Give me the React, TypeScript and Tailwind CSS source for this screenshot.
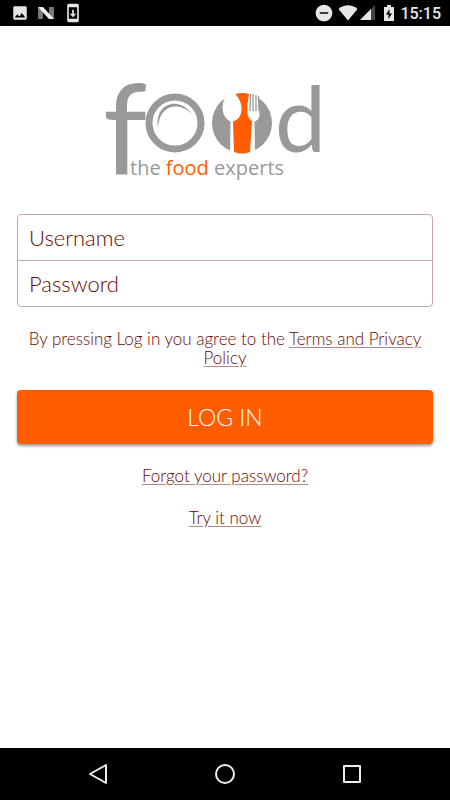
import { useState } from "react";
import { MdImage, MdSystemUpdate, MdDoNotDisturbOn } from "react-icons/md";

function StatusBar() {
  return (
    <header className="flex h-[26px] items-center justify-between bg-black pl-[11px] pr-[9px] text-[#e6e6e6]">
      <div className="flex items-center gap-2">
        <MdImage className="size-[18px]" />
        <svg viewBox="0 0 18 16" className="h-4 w-[18px]">
          <path d="M1 2h5v12H1zM12 2h5v12h-5z" fill="#777" />
          <path d="M1 2h5l11 12h-5z" fill="#f0f0f0" />
        </svg>
        <MdSystemUpdate className="size-5" />
      </div>
      <div className="flex items-center">
        <MdDoNotDisturbOn className="size-5" />
        <svg viewBox="0 0 20 16" className="ml-1 h-4 w-5" fill="currentColor">
          <path d="M0.5 4C6-1 14-1 19.5 4L10 15.500z" />
        </svg>
        <svg viewBox="0 0 16 16" className="ml-0.5 h-4 w-4">
          <path d="M15 0v15H0z" fill="#444" />
          <path d="M11 4v11H0z" fill="currentColor" />
        </svg>
        <svg viewBox="0 0 10 16" className="ml-2 h-4 w-2.5">
          <path d="M3 0h4v2h3v14H0V2h3z" fill="currentColor" />
          <path d="M5.500 4L2 9.500h2.500V14L8 8.500H5.500z" fill="#000" />
        </svg>
        <span className="ml-1.5 pt-0.5 font-['Roboto',sans-serif] text-base font-medium">
          15:15
        </span>
      </div>
    </header>
  );
}

function Logo() {
  return (
    <svg
      viewBox="-5 -40 250 176"
      className="mx-auto w-[250px]"
      role="img"
      aria-label="food, the food experts"
    >
      <g fill="#999" fontFamily="'Lato', sans-serif" fontWeight="400">
        <text x="-2" y="97" fontSize="126">
          f
        </text>
        <text x="170" y="74" fontSize="91">
          d
        </text>
      </g>

      {/* plate */}
      <circle cx="70" cy="45" r="26" fill="none" stroke="#999" strokeWidth="7" />
      <path d="M53 50C49 26 73 17 87 36C74 23 54 26 53 50z" fill="#999" />

      {/* spoon and fork */}
      <circle cx="137" cy="45" r="30" fill="#999" />
      <path
        d="M119 22Q116 30 119 37Q122 42 125.500 43.500L125 76H146L150 76L149.500 43.500Q154 42 154.500 37L153 16L144 13L125 10z"
        fill="#fff"
      />
      <path
        d="M130.500 16Q137 14 144 16Q141.500 26 142.500 36Q143.500 41 147 43L145 74Q137 77 129 74L128 43.500Q135 42 136.500 33Q137.500 24 130.500 16z"
        fill="#ff5d00"
      />
      <path d="M145.500 16L145 33M148 16V33M151 17V33M153.500 18L154 33" stroke="#999" strokeWidth="1.300" />

      <text
        x="25"
        y="97"
        fontSize="20"
        fill="#999"
        fontFamily="'Open Sans', sans-serif"
        fontWeight="400"
      >
        the <tspan fill="#ff5d00">food</tspan> experts
      </text>
    </svg>
  );
}

function NavBar() {
  return (
    <nav className="flex h-[52px] items-center justify-around bg-black px-[34px] text-[#eee]">
      <button type="button" aria-label="Back">
        <svg viewBox="0 0 22 22" className="size-[22px]" fill="none" stroke="currentColor" strokeWidth="2" strokeLinejoin="round">
          <path d="M19 2v18L3 11z" />
        </svg>
      </button>
      <button type="button" aria-label="Home">
        <svg viewBox="0 0 22 22" className="size-[22px]" fill="none" stroke="currentColor" strokeWidth="2">
          <circle cx="11" cy="11" r="9" />
        </svg>
      </button>
      <button type="button" aria-label="Recent apps">
        <svg viewBox="0 0 22 22" className="size-[22px]" fill="none" stroke="currentColor" strokeWidth="2" strokeLinejoin="round">
          <rect x="3" y="3" width="16" height="16" />
        </svg>
      </button>
    </nav>
  );
}

export default function App() {
  const [username, setUsername] = useState("");
  const [password, setPassword] = useState("");

  return (
    <div className="flex min-h-screen flex-col bg-white font-['Lato',sans-serif] font-light text-[#690800]">
      <StatusBar />
      <main className="flex-1 px-[17px] pt-3">
        <Logo />
        <form onSubmit={(e) => e.preventDefault()}>
          <div className="divide-y divide-[#c4aaa7] rounded border border-[#c4aaa7]">
            <input
              type="text"
              aria-label="Username"
              placeholder="Username"
              value={username}
              onChange={(e) => setUsername(e.target.value)}
              className="block h-[46px] w-full px-[11px] text-[22px] outline-none placeholder:text-[#690800]"
            />
            <input
              type="password"
              aria-label="Password"
              placeholder="Password"
              value={password}
              onChange={(e) => setPassword(e.target.value)}
              className="block h-[45px] w-full px-[11px] text-[22px] outline-none placeholder:text-[#690800]"
            />
          </div>
          <p className="mt-[22px] text-center text-[17px] leading-[19px]">
            By pressing Log in you agree to the{" "}
            <a href="#terms" className="underline decoration-[#b08a86] underline-offset-2">
              Terms and Privacy Policy
            </a>
          </p>
          <button
            type="submit"
            className="mt-[23px] block h-[54px] w-full rounded bg-[#ff5d00] text-[23px] text-white shadow-[0_2px_3px_rgba(0,0,0,0.4)]"
          >
            LOG IN
          </button>
        </form>
        <div className="mt-[22px] flex flex-col items-center gap-[22px] text-[17px] leading-[20px]">
          <a href="#forgot" className="underline decoration-[#b08a86] underline-offset-2">
            Forgot your password?
          </a>
          <a href="#try" className="underline decoration-[#b08a86] underline-offset-2">
            Try it now
          </a>
        </div>
      </main>
      <NavBar />
    </div>
  );
}
